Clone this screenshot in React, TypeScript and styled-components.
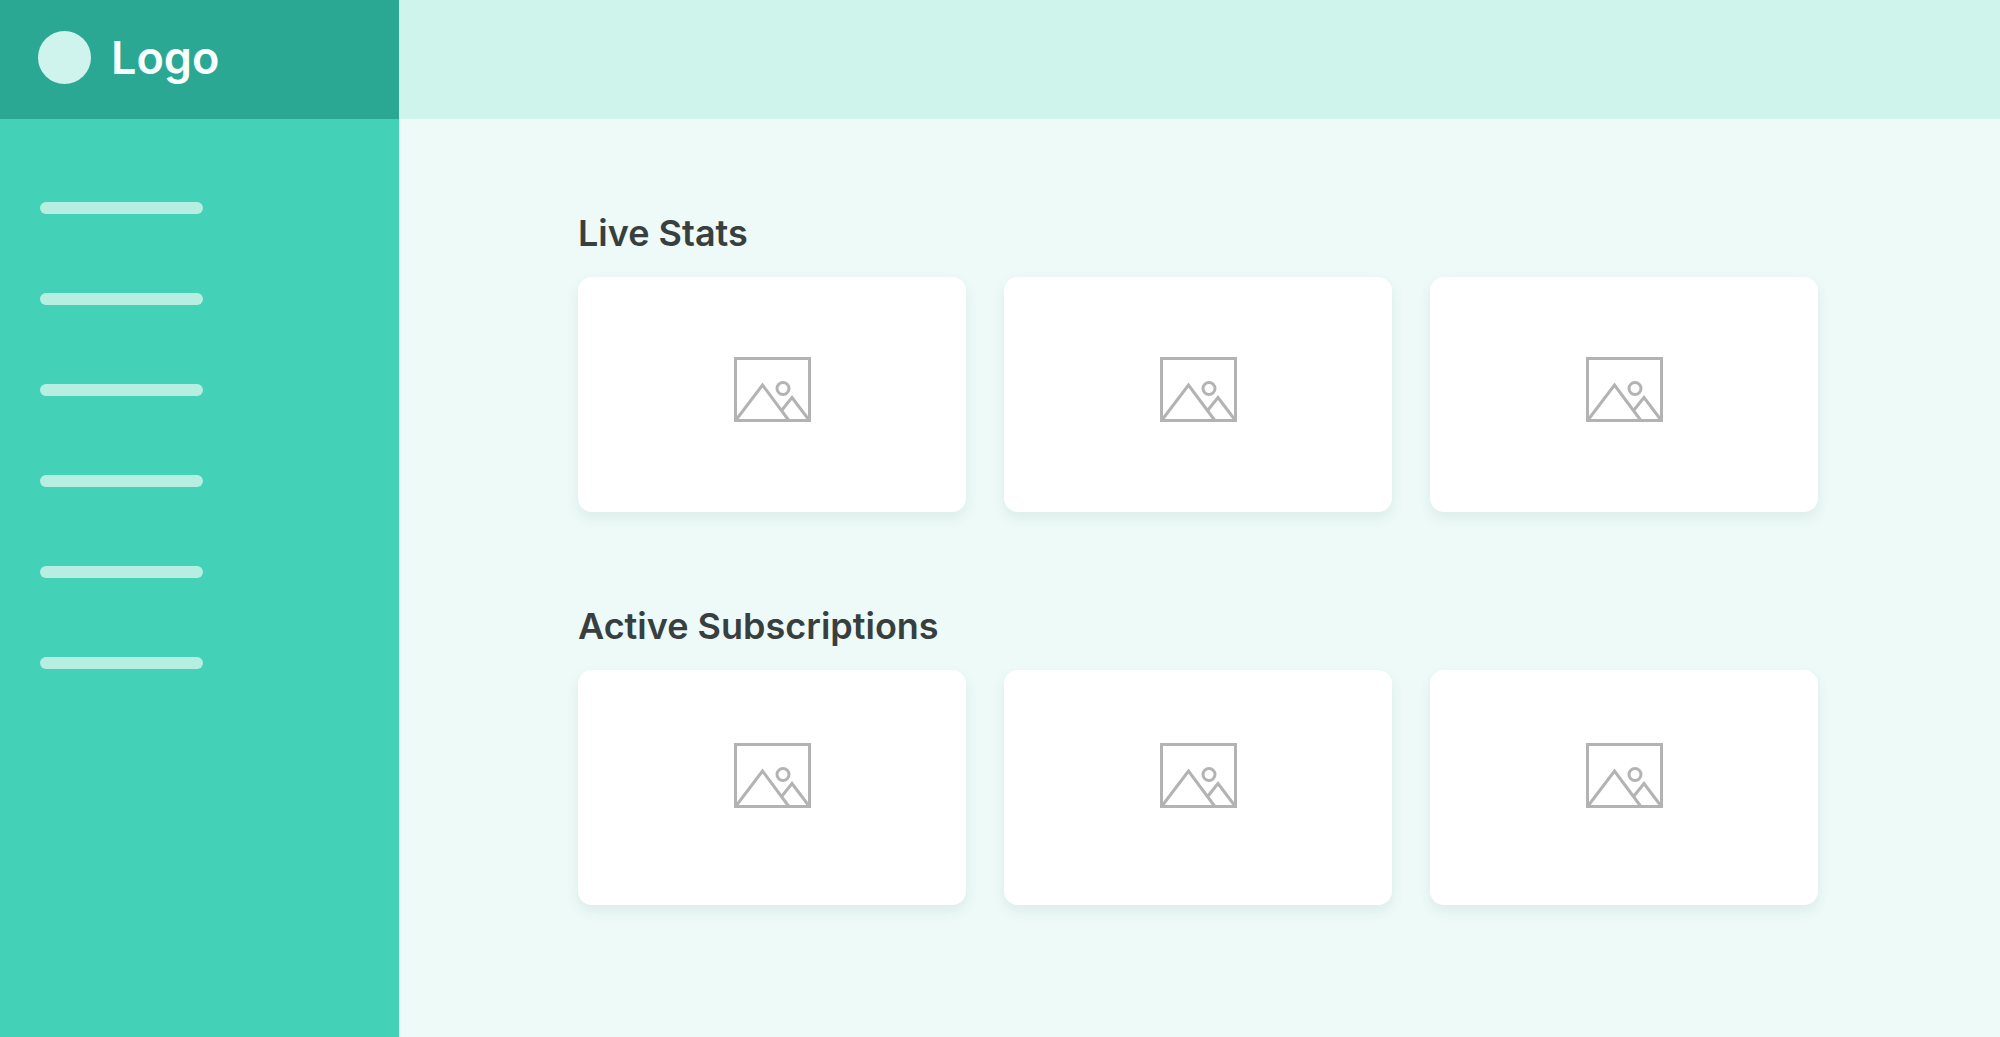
import React from "react";
import styled, { createGlobalStyle } from "styled-components";

const GlobalStyle = createGlobalStyle`
  *, *::before, *::after { box-sizing: border-box; }
  body {
    margin: 0;
    background: #edfaf8;
    color: #38403f;
    font-family: Inter, "Liberation Sans", sans-serif;
  }
`;

const Shell = styled.div`
  display: grid;
  grid-template-columns: 399px minmax(0, 1fr);
  grid-template-rows: 119px 1fr;
  min-height: 100vh;
`;

const Brand = styled.div`
  display: flex;
  align-items: center;
  gap: 20px;
  padding: 0 38px 4px;
  background: #2aa893;
`;

const BrandMark = styled.span`
  width: 53px;
  height: 53px;
  border-radius: 50%;
  background: #cff4ee;
`;

const BrandName = styled.span`
  color: #f8fffe;
  font-size: 45px;
  font-weight: 600;
  line-height: 52px;
`;

const TopBar = styled.header`
  background: #cff4ec;
`;

const Sidebar = styled.nav`
  padding: 83px 40px 0;
  background: #43d2b8;
`;

const Menu = styled.ul`
  display: flex;
  flex-direction: column;
  gap: 79px;
  margin: 0;
  padding: 0;
  list-style: none;
`;

const MenuLink = styled.a`
  display: block;
  width: 163px;
  height: 12px;
  border-radius: 6px;
  background: #b6eee2;
`;

const Content = styled.main`
  display: flex;
  flex-direction: column;
  gap: 94px;
  padding: 94px 182px 94px 179px;
`;

const SectionTitle = styled.h2`
  margin: 0 0 24px;
  font-size: 36px;
  font-weight: 600;
  line-height: 40px;
`;

const CardGrid = styled.div`
  display: grid;
  grid-template-columns: repeat(3, minmax(0, 1fr));
  gap: 38px;
`;

const Card = styled.article<{ $lift: number }>`
  display: flex;
  align-items: center;
  justify-content: center;
  height: 235px;
  padding-bottom: ${({ $lift }) => $lift}px;
  border-radius: 14px;
  background: #fff;
  box-shadow: 0 6px 14px rgba(30, 80, 70, 0.08);
`;

const Picture = styled.svg`
  display: block;
  width: 77px;
  height: 65px;
  fill: none;
  stroke: #b3b3b3;
  stroke-width: 3;
`;

function PictureIcon() {
  return (
    <Picture viewBox="0 0 77 65" aria-hidden="true">
      <rect x="1.5" y="1.5" width="74" height="62" />
      <path d="M2 63 28.5 28 54.5 63" />
      <path d="M48 53 58 40.5 75 63" />
      <circle cx="49" cy="31.5" r="6" />
    </Picture>
  );
}

const sections = [
  { title: "Live Stats", lift: 10 },
  { title: "Active Subscriptions", lift: 24 },
];

export default function App() {
  return (
    <>
      <GlobalStyle />
      <Shell>
        <Brand>
          <BrandMark />
          <BrandName>Logo</BrandName>
        </Brand>
        <TopBar />
        <Sidebar aria-label="Main">
          <Menu>
            {[1, 2, 3, 4, 5, 6].map((n) => (
              <li key={n}>
                <MenuLink href={`#page-${n}`} aria-label={`Page ${n}`} />
              </li>
            ))}
          </Menu>
        </Sidebar>
        <Content>
          {sections.map(({ title, lift }) => (
            <section key={title}>
              <SectionTitle>{title}</SectionTitle>
              <CardGrid>
                {[1, 2, 3].map((n) => (
                  <Card key={n} $lift={lift}>
                    <PictureIcon />
                  </Card>
                ))}
              </CardGrid>
            </section>
          ))}
        </Content>
      </Shell>
    </>
  );
}
